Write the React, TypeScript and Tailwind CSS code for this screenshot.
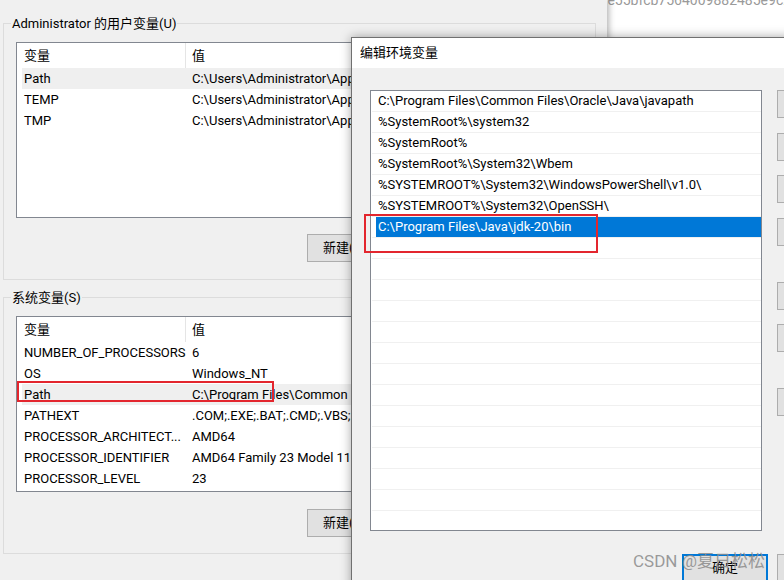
const font = { fontFamily: 'Roboto, "Noto Sans CJK SC", sans-serif' };

type Row = { name: string; value: string; hover?: boolean };

const userVars: Row[] = [
  { name: 'Path', value: 'C:\\Users\\Administrator\\AppData\\Local\\Microsoft\\WindowsApps;', hover: true },
  { name: 'TEMP', value: 'C:\\Users\\Administrator\\AppData\\Local\\Temp' },
  { name: 'TMP', value: 'C:\\Users\\Administrator\\AppData\\Local\\Temp' },
];

const sysVars: Row[] = [
  { name: 'NUMBER_OF_PROCESSORS', value: '6' },
  { name: 'OS', value: 'Windows_NT' },
  { name: 'Path', value: 'C:\\Program Files\\Common Files\\Oracle\\Java\\javapath;%SystemRoot%', hover: true },
  { name: 'PATHEXT', value: '.COM;.EXE;.BAT;.CMD;.VBS;.VBE;.JS;.JSE;.WSF;.WSH;.MSC' },
  { name: 'PROCESSOR_ARCHITECT...', value: 'AMD64' },
  { name: 'PROCESSOR_IDENTIFIER', value: 'AMD64 Family 23 Model 113 Stepping 0, AuthenticAMD' },
  { name: 'PROCESSOR_LEVEL', value: '23' },
];

const paths = [
  'C:\\Program Files\\Common Files\\Oracle\\Java\\javapath',
  '%SystemRoot%\\system32',
  '%SystemRoot%',
  '%SystemRoot%\\System32\\Wbem',
  '%SYSTEMROOT%\\System32\\WindowsPowerShell\\v1.0\\',
  '%SYSTEMROOT%\\System32\\OpenSSH\\',
  'C:\\Program Files\\Java\\jdk-20\\bin',
];

function WinButton({ label, className = '' }: { label: string; className?: string }) {
  return (
    <div
      className={`flex h-[28px] shrink-0 items-center justify-center whitespace-nowrap border border-[#adadad] bg-[#e1e1e1] text-black ${className}`}
    >
      {label}
    </div>
  );
}

function VarList({ rows, children }: { rows: Row[]; children?: React.ReactNode }) {
  return (
    <div className="relative h-[176px] w-[570px] overflow-hidden border border-[#828790] bg-white">
      <div className="flex h-[25px] items-stretch">
        <div className="flex w-[169px] items-center border-r border-[#e5e5e5] pl-[7px]">变量</div>
        <div className="flex items-center pl-[6px]">值</div>
      </div>
      {rows.map((r) => (
        <div
          key={r.name}
          className={`ml-[5px] flex h-[21px] items-center whitespace-nowrap ${r.hover ? 'bg-[#efefef]' : ''}`}
        >
          <div className="w-[168px] shrink-0 overflow-hidden pl-[2px]">{r.name}</div>
          <div className="pl-[2px]">{r.value}</div>
        </div>
      ))}
      {children}
    </div>
  );
}

function GroupBox({ title, className = '', children }: { title: string; className?: string; children: React.ReactNode }) {
  return (
    <div className={`relative h-[257px] w-[593px] border border-[#dcdcdc] px-[12px] pt-[18px] ${className}`}>
      <span className="absolute -top-[8px] left-[7px] bg-[#f0f0f0] px-[1px] leading-[16px]">{title}</span>
      {children}
    </div>
  );
}

export default function App() {
  const blanks = Array.from({ length: 14 });
  return (
    <div className="relative h-[580px] w-[784px] overflow-hidden bg-white text-[13px] text-black" style={font}>
      {/* window behind, top right */}
      <div className="absolute left-[600px] top-0 h-[40px] w-[200px] overflow-hidden bg-white">
        <span className="absolute -top-[10px] left-[4px] whitespace-nowrap text-[14px] text-[#9a9a9a]">
          le55bfcb7564009882485e9c2
        </span>
      </div>

      {/* environment variables window */}
      <div className="absolute left-0 top-0 h-[580px] w-[607px] bg-[#f0f0f0] pl-[3px] pt-[23px] shadow-[2px_0_6px_rgba(0,0,0,0.3)]">
        <GroupBox title="Administrator 的用户变量(U)">
          <VarList rows={userVars} />
          <WinButton label="新建(N)..." className="ml-[291px] mt-[16px] w-[86px] justify-start pl-[15px]" />
        </GroupBox>

        <GroupBox title="系统变量(S)" className="mt-[17px]">
          <VarList rows={sysVars}>
            <div className="absolute left-[0px] top-[64px] h-[21px] w-[257px] border-2 border-[#e3262e]" />
          </VarList>
          <WinButton label="新建(W)..." className="ml-[291px] mt-[17px] w-[86px] justify-start pl-[15px]" />
        </GroupBox>
      </div>

      {/* edit dialog */}
      <div className="absolute left-[351px] top-[37px] h-[560px] w-[620px] border border-[#707070] bg-[#f0f0f0] shadow-[0_0_10px_rgba(0,0,0,0.35)]">
        <div className="flex h-[30px] items-center bg-white pl-[8px]">编辑环境变量</div>

        <div className="flex pl-[18px] pt-[22px]">
          <div className="h-[441px] w-[392px] shrink-0 overflow-hidden border border-[#828790] bg-white">
            {paths.map((p, i) => {
              const selected = i === paths.length - 1;
              return (
                <div key={p} className="ml-[1px] flex h-[21px] border-b border-[#f0f0f0]">
                  <div
                    className={`ml-[4px] flex flex-1 items-center whitespace-nowrap pl-[2px] ${
                      selected ? 'bg-[#0078d7] text-white' : ''
                    }`}
                  >
                    {p}
                  </div>
                </div>
              );
            })}
            {blanks.map((_, i) => (
              <div key={i} className="ml-[1px] h-[21px] border-b border-[#f0f0f0]" />
            ))}
          </div>

          <div className="ml-[15px] flex shrink-0 flex-col">
            <WinButton label="新建(N)" className="w-[110px]" />
            <WinButton label="编辑(E)" className="mt-[15px] w-[110px]" />
            <WinButton label="浏览(B)..." className="mt-[14px] w-[110px]" />
            <WinButton label="删除(D)" className="mt-[15px] w-[110px]" />
            <WinButton label="上移(U)" className="mt-[36px] w-[110px]" />
            <WinButton label="下移(O)" className="mt-[14px] w-[110px]" />
            <WinButton label="编辑文本(T)..." className="mt-[36px] w-[110px]" />
          </div>
        </div>

        <div className="ml-[330px] mt-[23px] flex">
          <div className="flex h-[28px] w-[86px] shrink-0 items-center justify-center border-2 border-[#0078d7] bg-[#e1e1e1]">
            确定
          </div>
          <WinButton label="取消" className="ml-[9px] w-[86px]" />
        </div>

        <div className="absolute left-[12px] top-[176px] h-[39px] w-[234px] border-2 border-[#e3262e]" />
      </div>

      <span className="absolute left-[633px] top-[551px] whitespace-nowrap text-[17px] leading-[20px] text-[#8a8a8a]/85">
        CSDN @夏日松松
      </span>
    </div>
  );
}
